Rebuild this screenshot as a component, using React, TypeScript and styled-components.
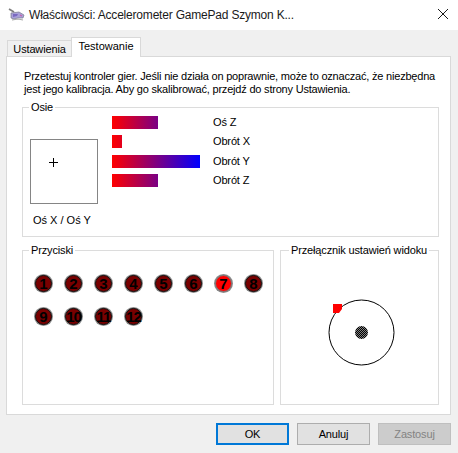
import styled, { createGlobalStyle } from "styled-components";

const axes = [
  { name: "Oś Z", value: 46 },
  { name: "Obrót X", value: 10 },
  { name: "Obrót Y", value: 88 },
  { name: "Obrót Z", value: 46 },
];

const buttons = [1, 2, 3, 4, 5, 6, 7, 8, 9, 10, 11, 12];

export default function App() {
  return (
    <Dialog>
      <GlobalStyle />
      <TitleBar>
        <GamepadIcon />
        <Title>Właściwości: Accelerometer GamePad Szymon K...</Title>
        <CloseIcon />
      </TitleBar>
      <Body>
        <Tabs>
          <Tab>Ustawienia</Tab>
          <Tab $active>Testowanie</Tab>
        </Tabs>
        <Panel>
          <Intro>
            Przetestuj kontroler gier. Jeśli nie działa on poprawnie, może to oznaczać, że niezbędna
            <br />
            jest jego kalibracja. Aby go skalibrować, przejdź do strony Ustawienia.
          </Intro>
          <AxesGroup>
            <Legend>Osie</Legend>
            <StickColumn>
              <StickBox>
                <Crosshair />
              </StickBox>
              <StickLabel>Oś X / Oś Y</StickLabel>
            </StickColumn>
            <AxisList>
              {axes.map((axis) => (
                <AxisRow key={axis.name}>
                  <AxisTrack>
                    <AxisBar $width={axis.value} />
                  </AxisTrack>
                  <span>{axis.name}</span>
                </AxisRow>
              ))}
            </AxisList>
          </AxesGroup>
          <BottomRow>
            <ButtonsGroup>
              <Legend>Przyciski</Legend>
              <ButtonGrid>
                {buttons.map((n) => (
                  <Lamp key={n} $on={n === 7} $wide={n > 9}>
                    {n}
                  </Lamp>
                ))}
              </ButtonGrid>
            </ButtonsGroup>
            <PovGroup>
              <PovLegend>Przełącznik ustawień widoku</PovLegend>
              <PovDial />
            </PovGroup>
          </BottomRow>
        </Panel>
        <Footer>
          <DialogButton $primary>OK</DialogButton>
          <DialogButton>Anuluj</DialogButton>
          <DialogButton disabled>Zastosuj</DialogButton>
        </Footer>
      </Body>
    </Dialog>
  );
}

function GamepadIcon() {
  return (
    <IconSvg width="17" height="14" viewBox="0 0 17 14">
      <path d="M1 1 L6 4" stroke="#7d7d7d" strokeWidth="1.6" fill="none" />
      <path d="M3 5 L11 4 L16 7 L15 10 L10 10 L6 11 L3 10 Z" fill="#a8a0d8" stroke="#7a7a8c" strokeWidth="0.7" />
      <path d="M5 6 L10 6 L9 8 L5 9 Z" fill="#7a68c0" />
      <path d="M12 7 L14 8" stroke="#c860a8" strokeWidth="1.2" />
      <path d="M4 12 L10 11 L15 12" stroke="#a8a8a8" strokeWidth="1.2" fill="none" />
    </IconSvg>
  );
}

function CloseIcon() {
  return (
    <CloseSvg width="10" height="10" viewBox="0 0 10 10">
      <path d="M0 0 L10 10 M10 0 L0 10" stroke="#1a1a1a" strokeWidth="1" fill="none" />
    </CloseSvg>
  );
}

function Crosshair() {
  return (
    <CrossSvg width="9" height="9" viewBox="0 0 9 9">
      <path d="M4.5 0 V9 M0 4.5 H9" stroke="#000" strokeWidth="1" fill="none" />
    </CrossSvg>
  );
}

function PovDial() {
  return (
    <DialSvg width="70" height="72" viewBox="0 0 70 72">
      <defs>
        <pattern id="dither" width="2" height="2" patternUnits="userSpaceOnUse">
          <rect width="2" height="2" fill="#808080" />
          <rect width="1" height="1" fill="#000" />
          <rect x="1" y="1" width="1" height="1" fill="#000" />
        </pattern>
      </defs>
      <circle cx="36.5" cy="38.5" r="32.5" fill="none" stroke="#000" strokeWidth="1" />
      <circle cx="36.5" cy="38.5" r="6.5" fill="url(#dither)" />
      <path d="M8 10 H17 V15 L14 19 H8 Z" fill="#f00" />
    </DialSvg>
  );
}

const GlobalStyle = createGlobalStyle`
  html, body {
    margin: 0;
    padding: 0;
    background: #ffffff;
  }
  body {
    font-family: "Liberation Sans", Arial, sans-serif;
    font-size: 11px;
    letter-spacing: -0.15px;
    color: #000000;
  }
`;

const Dialog = styled.div`
  width: 458px;
  height: 453px;
  display: flex;
  flex-direction: column;
  overflow: hidden;
`;

const TitleBar = styled.div`
  height: 30px;
  flex: none;
  display: flex;
  align-items: center;
  padding: 0 10px 0 8px;
  background: #ffffff;
`;

const IconSvg = styled.svg`
  flex: none;
  margin-right: 4px;
`;

const Title = styled.div`
  flex: 1;
  font-size: 12px;
  letter-spacing: -0.2px;
  color: #1a1a1a;
  white-space: nowrap;
`;

const CloseSvg = styled.svg`
  flex: none;
  margin-bottom: 2px;
`;

const Body = styled.div`
  flex: 1;
  display: flex;
  flex-direction: column;
  background: #f0f0f0;
  padding: 8px 7px 0 6px;
`;

const Tabs = styled.div`
  height: 19px;
  display: flex;
  align-items: flex-end;
  padding-left: 1px;
  margin-bottom: -1px;
  position: relative;
  z-index: 1;
`;

const Tab = styled.div<{ $active?: boolean }>`
  box-sizing: border-box;
  height: ${(p) => (p.$active ? 20 : 17)}px;
  line-height: 17px;
  width: ${(p) => (p.$active ? 70 : 64)}px;
  text-align: center;
  letter-spacing: ${(p) => (p.$active ? "0" : "inherit")};
  background: ${(p) => (p.$active ? "#ffffff" : "#f0f0f0")};
  border: 1px solid #d9d9d9;
  border-bottom: ${(p) => (p.$active ? "none" : "1px solid #d9d9d9")};
  ${(p) => (p.$active ? "" : "border-right: none;")}
  color: #000;
  white-space: nowrap;
`;

const Panel = styled.div`
  box-sizing: border-box;
  height: 359px;
  background: #ffffff;
  border: 1px solid #d9d9d9;
  padding: 13px 10px 0 15px;
`;

const Intro = styled.p`
  margin: 0 0 4px 2px;
  line-height: 13px;
  letter-spacing: -0.2px;
  white-space: nowrap;
`;

const Group = styled.fieldset`
  box-sizing: border-box;
  min-width: 0;
  margin: 0;
  padding: 0;
  border: 1px solid #dcdcdc;
`;

const Legend = styled.legend`
  margin-left: 6px;
  padding: 0 2px;
  line-height: 14px;
  white-space: nowrap;
`;

const PovLegend = styled(Legend)`
  margin-left: 8px;
`;

const AxesGroup = styled(Group)`
  width: 417px;
  height: 137px;
  display: flex;
`;

const StickColumn = styled.div`
  width: 82px;
  flex: none;
  margin-left: 7px;
  padding-top: 25px;
`;

const StickBox = styled.div`
  box-sizing: border-box;
  width: 68px;
  height: 65px;
  border: 1px solid #858585;
  position: relative;
`;

const CrossSvg = styled.svg`
  position: absolute;
  left: 18px;
  top: 18px;
`;

const StickLabel = styled.div`
  margin: 9px 0 0 3px;
  line-height: 14px;
  letter-spacing: 0;
  white-space: nowrap;
`;

const AxisList = styled.div`
  display: flex;
  flex-direction: column;
  gap: 6.33px;
  padding-top: 2px;
`;

const AxisRow = styled.div`
  height: 13px;
  line-height: 13px;
  display: flex;
  white-space: nowrap;
`;

const AxisTrack = styled.div`
  width: 101px;
`;

const AxisBar = styled.div<{ $width: number }>`
  height: 13px;
  width: ${(p) => p.$width}px;
  background: linear-gradient(to right, #ff0000, #0000ff) 0 0 / 88px 100% no-repeat;
`;

const BottomRow = styled.div`
  display: flex;
  gap: 6px;
  margin-top: 6px;
`;

const ButtonsGroup = styled(Group)`
  width: 252px;
  height: 162px;
`;

const ButtonGrid = styled.div`
  display: grid;
  grid-template-columns: repeat(8, 30px);
  grid-auto-rows: 33px;
  margin: 18px 0 0 12px;
`;

const Lamp = styled.div<{ $on: boolean; $wide: boolean }>`
  box-sizing: border-box;
  width: 17px;
  height: 17px;
  border-radius: 50%;
  display: flex;
  align-items: center;
  justify-content: center;
  background: ${(p) => (p.$on ? "#ff0000" : "#780000")};
  border: 1px solid ${(p) => (p.$on ? "#7a7a7a" : "#111111")};
  box-shadow: 0 0 0 1px #8a8a8a;
  font-size: 15px;
  font-weight: 700;
  line-height: 15px;
  letter-spacing: ${(p) => (p.$wide ? "-1px" : "0")};
  color: #000000;
`;

const PovGroup = styled(Group)`
  width: 159px;
  height: 162px;
`;

const DialSvg = styled.svg`
  display: block;
  margin: 37px 0 0 44px;
`;

const Footer = styled.div`
  display: flex;
  justify-content: flex-end;
  gap: 8px;
  margin-top: 8px;
`;

const DialogButton = styled.button<{ $primary?: boolean }>`
  box-sizing: border-box;
  width: 73px;
  height: 22px;
  padding: 0;
  font-family: inherit;
  font-size: 11px;
  letter-spacing: inherit;
  background: ${(p) => (p.disabled ? "#cccccc" : "#e1e1e1")};
  color: ${(p) => (p.disabled ? "#838383" : "#000000")};
  border: ${(p) =>
    p.$primary ? "2px solid #0078d7" : p.disabled ? "1px solid #bfbfbf" : "1px solid #adadad"};
  border-radius: 0;
`;
